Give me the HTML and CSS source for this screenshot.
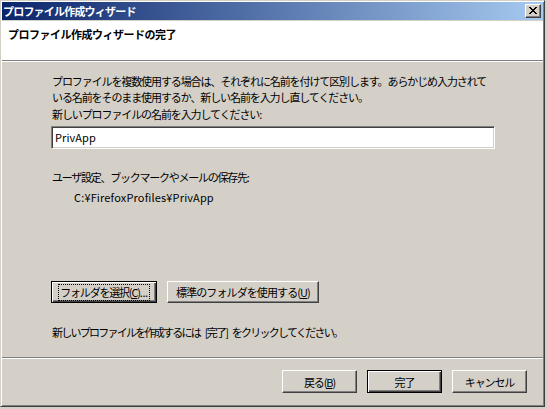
FILE: index.html
```html
<!DOCTYPE html>
<html lang="ja">
<head>
    <meta charset="UTF-8">
    <title>プロファイル作成ウィザード</title>
    <link rel="stylesheet" href="styles.css">
</head>
<body>
    <div class="window">
        <!-- Title bar -->
        <div class="titlebar">
            <span class="title">プロファイル作成ウィザード</span>
            <span class="close-button">
                <svg width="8" height="7" viewBox="0 0 8 7" shape-rendering="crispEdges">
                    <path d="M0 0h2v1h-2zM6 0h2v1h-2zM1 1h2v1h-2zM5 1h2v1h-2zM2 2h4v1h-4zM3 3h2v1h-2zM2 4h4v1h-4zM1 5h2v1h-2zM5 5h2v1h-2zM0 6h2v1h-2zM6 6h2v1h-2z" fill="#000"/>
                </svg>
            </span>
        </div>

        <!-- Header -->
        <div class="header">
            <h1>プロファイル作成ウィザードの完了</h1>
        </div>

        <!-- Page body -->
        <div class="page">
            <p class="intro">プロファイルを複数使用する場合は、それぞれに名前を付けて区別します。あらかじめ入力されて<br>いる名前をそのまま使用するか、新しい名前を入力し直してください。</p>
            <p class="label">新しいプロファイルの名前を入力してください:</p>
            <div class="text-field">PrivApp</div>
            <p class="label folder-label">ユーザ設定、ブックマークやメールの保存先:</p>
            <p class="path">C:¥FirefoxProfiles¥PrivApp</p>
            <div class="folder-buttons">
                <button class="win-button default focused"><span class="focus-ring">フォルダを選択(<u>C</u>)<span class="dots">...</span></span></button>
                <button class="win-button wide">標準のフォルダを使用する(<u>U</u>)</button>
            </div>
            <p class="label finish-note">新しいプロファイルを作成するには [完了] をクリックしてください。</p>
        </div>

        <!-- Footer -->
        <div class="footer">
            <button class="win-button">戻る(<u>B</u>)</button>
            <button class="win-button default">完了</button>
            <button class="win-button">キャンセル</button>
        </div>
    </div>
</body>
</html>
```

FILE: styles.css
```css
/* Global */
body {
    margin: 0;
    padding: 0;
    background: #D4D0C8;
    font-family: "Noto Sans CJK JP", "DejaVu Sans", sans-serif;
    font-size: 11px;
    color: #000;
}

p {
    margin: 0;
}

/* Window frame */
.window {
    width: 541px;
    height: 403px;
    padding: 1px;
    border: 1px solid;
    border-color: #D4D0C8 #404040 #404040 #D4D0C8;
    box-shadow: inset 1px 1px #fff, inset -1px -1px #808080;
    background: #D4D0C8;
    display: flex;
    flex-direction: column;
}

/* Title bar */
.titlebar {
    height: 18px;
    margin-bottom: 1px;
    background: linear-gradient(to right, #0A246A, #A6CAF0);
    display: flex;
    align-items: center;
    justify-content: space-between;
    padding: 0 2px 0 1px;
}

.titlebar .title {
    color: #fff;
    font-weight: bold;
    font-size: 11px;
    letter-spacing: -0.8px;
    line-height: 18px;
}

.close-button {
    width: 16px;
    height: 14px;
    box-sizing: border-box;
    border: 1px solid;
    border-color: #fff #404040 #404040 #fff;
    box-shadow: inset -1px -1px #808080;
    background: #D4D0C8;
    display: flex;
    align-items: center;
    justify-content: center;
    padding: 0 1px 1px 0;
}

.close-button svg {
    display: block;
}

/* Header */
.header {
    height: 39px;
    background: #fff;
    border-bottom: 1px solid #808080;
    box-shadow: 0 1px #fff;
    margin-bottom: 1px;
}

.header h1 {
    margin: 0;
    padding: 6px 0 0 6px;
    font-size: 11px;
    line-height: 14px;
    font-weight: bold;
    letter-spacing: -0.5px;
}

/* Page body */
.page {
    flex: 1;
    padding-left: 50px;
    letter-spacing: -1.1px;
}

.intro {
    margin-top: 11px;
    line-height: 16px;
    white-space: nowrap;
}

.label {
    margin-top: 2px;
    line-height: 14px;
    white-space: nowrap;
}

.text-field {
    width: 444px;
    height: 23px;
    box-sizing: border-box;
    margin: 5px 0 0 -1px;
    padding: 3px 0 0 3px;
    background: #fff;
    border: 1px solid;
    border-color: #808080 #fff #fff #808080;
    box-shadow: inset 1px 1px #404040, inset -1px -1px #D4D0C8;
    line-height: 14px;
    letter-spacing: 0.1px;
}

.folder-label {
    margin-top: 21px;
    letter-spacing: -1.25px;
}

.path {
    margin-top: 6px;
    padding-left: 22px;
    line-height: 14px;
    letter-spacing: 0.15px;
}

.folder-buttons {
    display: flex;
    gap: 10px;
    margin: 77px 0 0 -1px;
}

.folder-buttons .win-button {
    height: 22px;
    width: 106px;
}

.folder-buttons .win-button.wide {
    width: 152px;
    letter-spacing: -0.9px;
}

.finish-note {
    margin-top: 22px;
    letter-spacing: -1.75px;
    word-spacing: 4px;
}

/* Buttons */
.win-button {
    width: 75px;
    height: 23px;
    box-sizing: border-box;
    padding: 0;
    background: #D4D0C8;
    border: 1px solid;
    border-color: #fff #404040 #404040 #fff;
    box-shadow: inset -1px -1px #808080;
    font-family: inherit;
    font-size: 11px;
    letter-spacing: -1.1px;
    color: #000;
    white-space: nowrap;
    overflow: visible;
    display: flex;
    align-items: center;
    justify-content: center;
}

.win-button.default {
    border-color: #000;
    box-shadow: inset 1px 1px #fff, inset -1px -1px #404040, inset -2px -2px #808080;
}

.win-button.focused {
    letter-spacing: -1.2px;
}

.win-button.focused .focus-ring {
    outline: 1px dotted #000;
    outline-offset: 0;
    padding: 1px 1px 1px 1px;
    line-height: 13px;
}

.win-button .dots {
    letter-spacing: -0.4px;
}

.win-button u {
    text-decoration: underline;
}

/* Footer */
.footer {
    height: 48px;
    box-sizing: border-box;
    border-top: 1px solid #808080;
    box-shadow: inset 0 1px #fff;
    padding: 12px 16px 0 0;
    display: flex;
    justify-content: flex-end;
    gap: 10px;
}
```
